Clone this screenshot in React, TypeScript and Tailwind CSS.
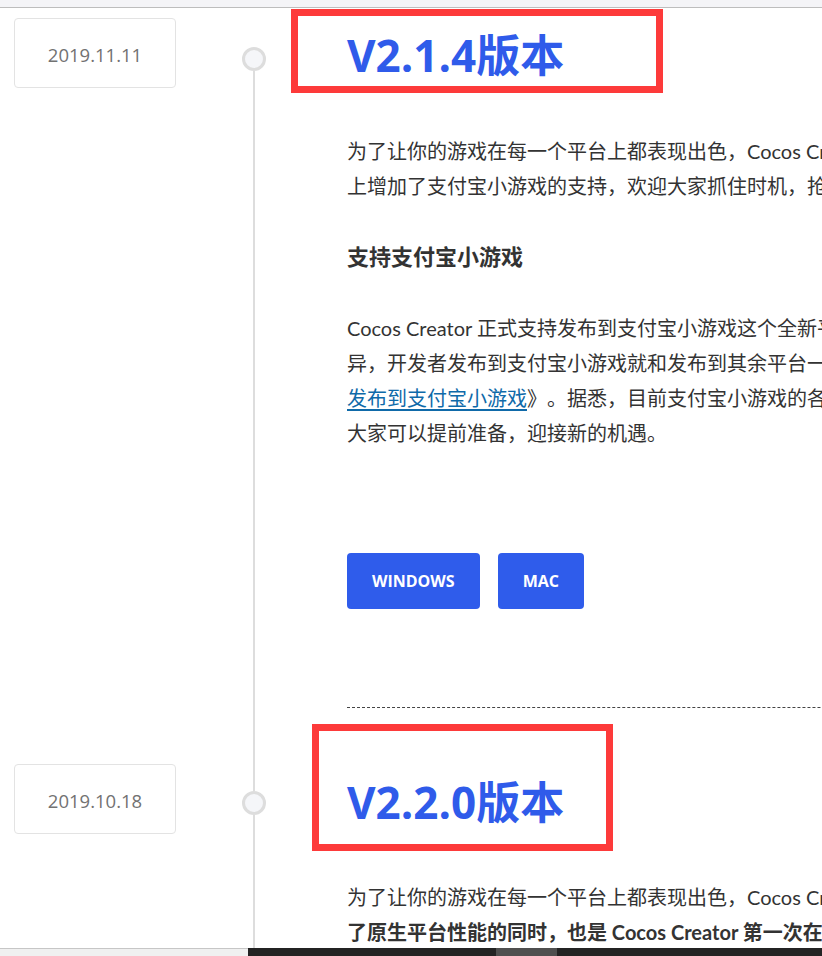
import React from "react";

const body = "font-['Lato','Noto_Sans_CJK_SC',sans-serif] [text-spacing-trim:space-all]";
const latin = "font-['Open_Sans','Noto_Sans_CJK_SC',sans-serif]";

function DateBox({ text }: { text: string }) {
  return (
    <div
      className={`ml-[14px] w-[162px] h-[70px] rounded-[4px] border border-[#e3e3e3] flex items-center justify-center pt-[3px] text-[18.5px] text-[#727272] ${latin}`}
    >
      {text}
    </div>
  );
}

function Circle() {
  return (
    <div className="w-[24px] h-[24px] shrink-0 rounded-full border-[3px] border-[#dddddd] bg-[#f5f6f9]" />
  );
}

function Title({ text, mt }: { text: string; mt: string }) {
  return (
    <h2
      className={`${mt} h-[60px] leading-[60px] text-[44px] font-bold text-[#2f5bea] whitespace-nowrap ${latin}`}
    >
      {text}
    </h2>
  );
}

export default function App() {
  return (
    <div className="relative w-[822px] h-[956px] overflow-hidden bg-white flex flex-col">
      {/* top strip */}
      <div className="h-[7px] bg-[#f4f4f7] shrink-0" />
      <div className="h-[1px] bg-[#bdbdbd] shrink-0" />

      <div className="flex-1 overflow-hidden flex flex-col">
        {/* entry 1 */}
        <div className="flex shrink-0 h-[700px]">
          <div className="w-[242px] shrink-0 pt-[10px]">
            <DateBox text="2019.11.11" />
          </div>
          <div className="w-[24px] shrink-0 flex flex-col items-center">
            <div className="h-[39px]" />
            <Circle />
            <div className="w-[2px] flex-1 bg-[#dddddd]" />
          </div>
          <div className={`pl-[81px] w-[1100px] shrink-0 text-[#333333] ${body}`}>
            <Title text="V2.1.4版本" mt="mt-[17px]" />
            <p className="mt-[49px] text-[20px] leading-[35px] whitespace-nowrap">
              为了让你的游戏在每一个平台上都表现出色，Cocos Creator 团队在 v2.1.4 版本中的原有平台基础
              <br />
              上增加了支付宝小游戏的支持，欢迎大家抓住时机，抢占先机！
            </p>
            <h3 className="mt-[35px] text-[22px] leading-[35px] font-bold whitespace-nowrap">
              支持支付宝小游戏
            </h3>
            <p className="mt-[37px] text-[20px] leading-[35px] whitespace-nowrap">
              Cocos Creator 正式支持发布到支付宝小游戏这个全新平台，支付宝小游戏与其他小游戏平台并无太大差
              <br />
              异，开发者发布到支付宝小游戏就和发布到其余平台一样简单，具体使用方法请参考文档《
              <br />
              <a className="text-[#0f6aa9] underline underline-offset-[3px]" href="#">
                发布到支付宝小游戏
              </a>
              》。据悉，目前支付宝小游戏的各项能力正在逐步开放中，
              <br />
              大家可以提前准备，迎接新的机遇。
            </p>
            <div className={`mt-[102px] flex gap-[18px] ${latin}`}>
              <button className="h-[56px] px-[25px] rounded-[4px] bg-[#2f5ceb] text-white text-[16px] font-bold">
                WINDOWS
              </button>
              <button className="h-[56px] px-[25px] rounded-[4px] bg-[#2f5ceb] text-white text-[16px] font-bold">
                MAC
              </button>
            </div>
            <div className="mt-[98px] border-t border-dashed border-[#444444]" />
          </div>
        </div>

        {/* entry 2 */}
        <div className="flex flex-1">
          <div className="w-[242px] shrink-0 pt-[56px]">
            <DateBox text="2019.10.18" />
          </div>
          <div className="w-[24px] shrink-0 flex flex-col items-center">
            <div className="w-[2px] h-[83px] bg-[#dddddd]" />
            <Circle />
            <div className="w-[2px] flex-1 bg-[#dddddd]" />
          </div>
          <div className={`pl-[81px] w-[1100px] shrink-0 text-[#333333] ${body}`}>
            <Title text="V2.2.0版本" mt="mt-[64px]" />
            <p className="mt-[48px] text-[20px] leading-[35px] whitespace-nowrap">
              为了让你的游戏在每一个平台上都表现出色，Cocos Creator v2.2.0 在大幅提升
              <br />
              <b>了原生平台性能的同时，也是 Cocos Creator 第一次在引擎层面进行的大规模重构</b>
            </p>
          </div>
        </div>
      </div>

      {/* bottom scrollbar strip */}
      <div className="h-[8px] shrink-0 flex">
        <div className="w-[248px] bg-[#f0f0f0] border-t border-[#c6c6c6]" />
        <div className="flex-1 bg-[#232323] flex">
          <div className="w-[248px]" />
          <div className="w-[61px] bg-[#4f4f4f]" />
        </div>
      </div>

      {/* red annotation boxes */}
      <div className="absolute left-[291px] top-[9px] w-[372px] h-[84px] border-[7px] border-[#fd3a3a]" />
      <div className="absolute left-[312px] top-[724px] w-[301px] h-[127px] border-[7px] border-[#fd3a3a]" />
    </div>
  );
}
